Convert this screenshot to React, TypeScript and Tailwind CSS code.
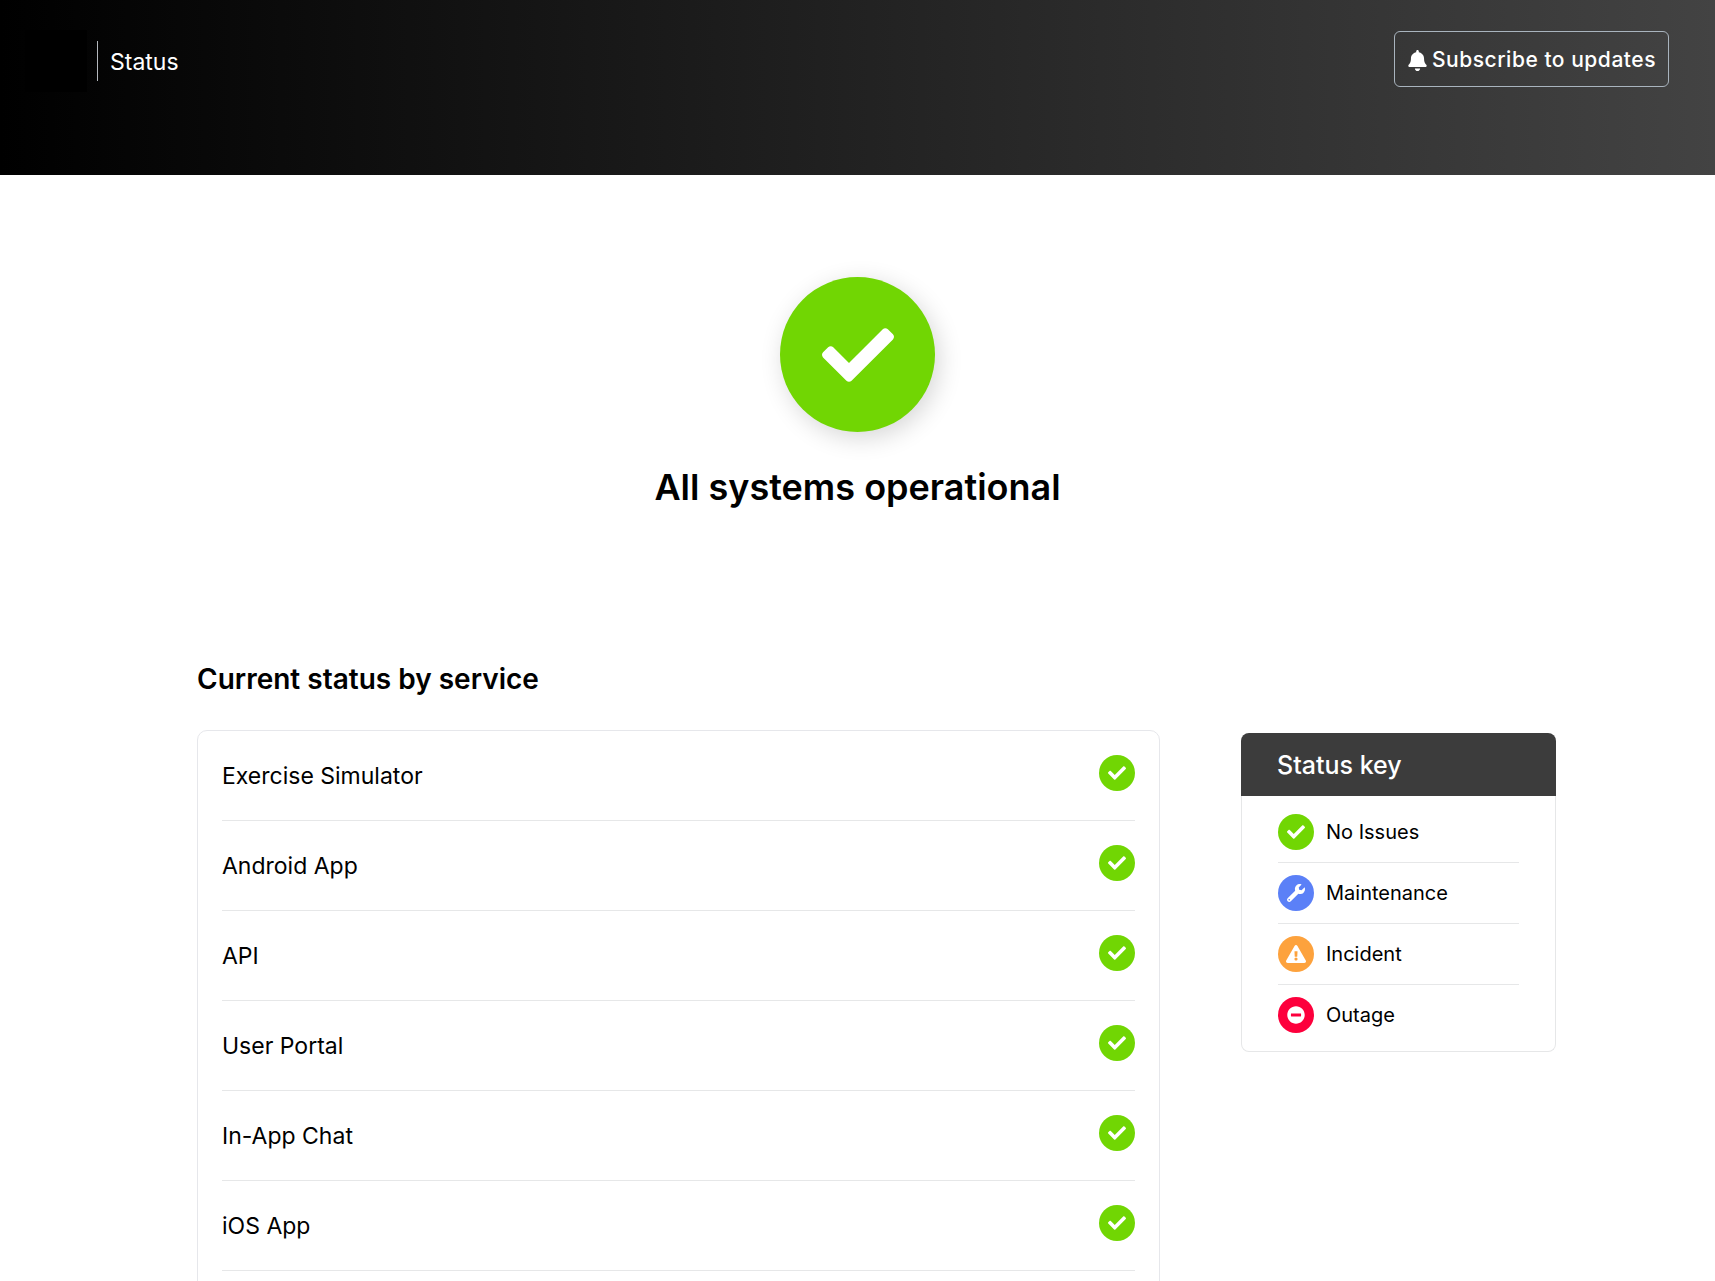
import { FaBell, FaCheck, FaExclamationTriangle, FaMinusCircle, FaWrench } from 'react-icons/fa'
import type { IconType } from 'react-icons'

type Status = 'ok' | 'maintenance' | 'incident' | 'outage'

const STATUS: Record<Status, { label: string; icon: IconType; color: string; size: number }> = {
  ok: { label: 'No Issues', icon: FaCheck, color: 'bg-[#71d603]', size: 18 },
  maintenance: { label: 'Maintenance', icon: FaWrench, color: 'bg-[#5b80f7]', size: 18 },
  incident: { label: 'Incident', icon: FaExclamationTriangle, color: 'bg-[#fda23d]', size: 20 },
  outage: { label: 'Outage', icon: FaMinusCircle, color: 'bg-[#fd003c]', size: 18 },
}

const KEY_ORDER: Status[] = ['ok', 'maintenance', 'incident', 'outage']

const SERVICES: { name: string; status: Status }[] = [
  { name: 'Exercise Simulator', status: 'ok' },
  { name: 'Android App', status: 'ok' },
  { name: 'API', status: 'ok' },
  { name: 'User Portal', status: 'ok' },
  { name: 'In-App Chat', status: 'ok' },
  { name: 'iOS App', status: 'ok' },
]

function StatusDot({ status }: { status: Status }) {
  const { icon: Icon, color, size } = STATUS[status]
  return (
    <span className={`flex size-9 shrink-0 items-center justify-center rounded-full text-white ${color}`}>
      <Icon size={size} aria-hidden />
    </span>
  )
}

function Header() {
  return (
    <header className="flex h-[175px] items-start justify-between bg-[linear-gradient(90deg,#000,#434343)] pl-[25px] pr-[46px] text-white">
      <div className="flex items-center pt-[30px]">
        <div className="size-[62px] bg-black" />
        <div className="ml-[10px] h-10 w-px bg-[#b4b8bd]" />
        <span className="ml-3 pt-[2px] text-[23px]">Status</span>
      </div>
      <button className="mt-[31px] flex h-14 items-center gap-1 rounded-md border border-[#a9b4be] px-3 pt-[2px] text-[21px] font-medium tracking-wide">
        <FaBell size={21} aria-hidden />
        Subscribe to updates
      </button>
    </header>
  )
}

function StatusKey() {
  return (
    <aside className="mt-[3px] w-[315px] shrink-0">
      <h3 className="flex h-[63px] items-center rounded-t-lg bg-[#3c3c3c] px-9 pt-[2px] text-[25px] font-medium text-white">
        Status key
      </h3>
      <ul className="rounded-b-lg border border-t-0 border-[#e6e7e8] px-9 pb-[6px] pt-[6px]">
        {KEY_ORDER.map((status) => (
          <li
            key={status}
            className="flex items-center gap-3 border-b border-[#e6e7e8] py-3 text-xl last:border-b-0"
          >
            <StatusDot status={status} />
            {STATUS[status].label}
          </li>
        ))}
      </ul>
    </aside>
  )
}

export default function App() {
  return (
    <div className="h-screen overflow-hidden bg-white font-['Inter',sans-serif] text-black">
      <Header />
      <main>
        {/* Overall status */}
        <section className="flex flex-col items-center pt-[102px]">
          <div className="flex size-[155px] items-center justify-center rounded-full bg-[#71d603] text-white shadow-[4px_6px_24px_rgba(0,0,0,0.16)]">
            <FaCheck size={72} aria-hidden />
          </div>
          <h1 className="mt-[31px] text-4xl font-semibold leading-12">All systems operational</h1>
        </section>

        {/* Services */}
        <section className="pl-[197px] pr-[159px] pt-[148px]">
          <h2 className="text-[28px] font-semibold leading-10">Current status by service</h2>
          <div className="mt-[31px] flex items-start gap-[81px]">
            <ul className="min-w-0 flex-1 rounded-[10px] border border-[#e6e7eb] px-6 pb-6">
              {SERVICES.map(({ name, status }) => (
                <li key={name} className="flex h-[90px] items-start justify-between border-b border-[#e6e7e8] pt-6">
                  <span className="text-[23px] leading-[42px]">{name}</span>
                  <StatusDot status={status} />
                </li>
              ))}
            </ul>
            <StatusKey />
          </div>
        </section>
      </main>
    </div>
  )
}
